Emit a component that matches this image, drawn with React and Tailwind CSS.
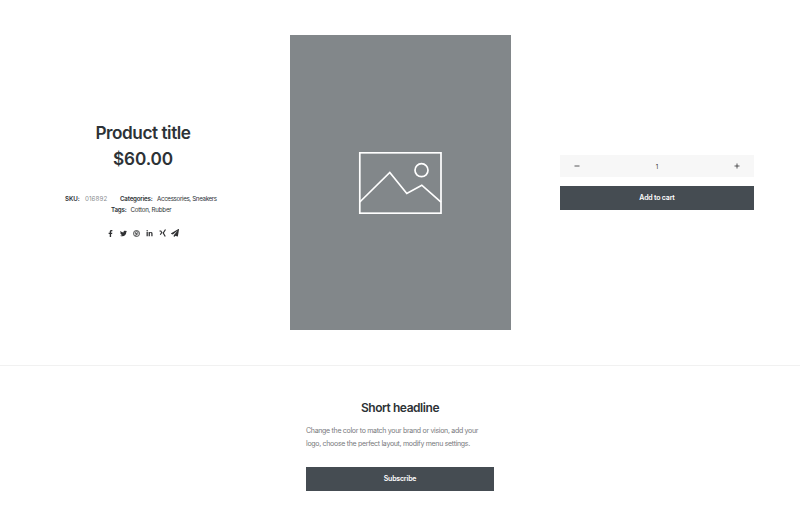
import { FaFacebookF, FaTwitter, FaLinkedinIn, FaPaperPlane } from "react-icons/fa";

function SocialLinks() {
  return (
    <div className="mt-[14px] flex h-2 items-center justify-center pr-[2px] text-[#303133]">
      <span className="flex w-[13px] justify-center"><FaFacebookF size={7} /></span>
      <span className="flex w-[13px] justify-center"><FaTwitter size={7} /></span>
      <span className="flex w-[13px] justify-center">
        <svg width="7" height="7" viewBox="0 0 14 14" fill="none" stroke="currentColor" strokeWidth="1.7">
          <circle cx="7" cy="7" r="6" />
          <path d="M5.500 12 7 6M4.800 8C3.200 5 5 3.400 7.200 3.400c2.400 0 3.400 2 2.500 4-.8 2-2.800 1.800-3.200.8" />
        </svg>
      </span>
      <span className="flex w-[13px] justify-center"><FaLinkedinIn size={7} /></span>
      <span className="flex w-[13px] justify-center">
        <svg width="7" height="8" viewBox="0 0 14 16" fill="none" stroke="currentColor" strokeWidth="2.400">
          <path d="M1 4h2.500l2 3-3 4.500M13 1 8.500 8l4 7" />
        </svg>
      </span>
      <span className="flex w-[11px] justify-center"><FaPaperPlane size={8} /></span>
    </div>
  );
}

function ProductInfo() {
  return (
    <div className="w-[194px] pt-[120px] text-center text-[#2d3236]">
      <h1 className="text-[17.200px] leading-[26px] font-semibold tracking-[-0.45px]">Product title</h1>
      <p className="text-[17.200px] leading-[26px] font-semibold tracking-[-0.1px]">$60.00</p>
      <div className="mt-[21px] flex h-[11px] items-center pl-[19px] text-left text-[6.200px] leading-[11px] whitespace-nowrap">
        <b className="w-5 font-semibold tracking-[-0.1px]">SKU:</b>
        <span className="w-[35px] tracking-[0.1px] text-[#8a8d90]">016892</span>
        <b className="w-[37px] font-semibold tracking-[-0.2px]">Categories:</b>
        <span className="tracking-[-0.33px]">Accessories, Sneakers</span>
      </div>
      <div className="flex h-[11px] items-center pl-[65px] text-left text-[6.200px] leading-[11px] whitespace-nowrap">
        <b className="w-[19.500px] font-semibold tracking-[-0.2px]">Tags:</b>
        <span className="tracking-[-0.23px]">Cotton, Rubber</span>
      </div>
      <SocialLinks />
    </div>
  );
}

function ProductImage() {
  return (
    <div className="mt-[35px] flex h-[295px] w-[221px] items-center justify-center bg-[#82878a] pt-px">
      <svg className="h-[62px] w-[84px]" viewBox="0 0 84 62" fill="none" stroke="#fff" strokeWidth="1.700">
        <rect x="1.800" y="0.800" width="81.200" height="60.400" />
        <path d="m1.800 50 30-29.500 17 21 15-8.300 19.200 17" />
        <circle cx="63.500" cy="18.200" r="6.500" />
      </svg>
    </div>
  );
}

function PurchaseForm() {
  return (
    <div className="w-[194px] pt-[155px] text-[#303133]">
      <div className="flex h-[22px] items-center justify-between bg-[#f7f7f7] px-[14px]">
        <svg className="size-[6px]" viewBox="0 0 6 6" stroke="currentColor" strokeWidth="0.800"><path d="M.5 3h5" /></svg>
        <span className="pt-px text-[6px] leading-[8px]">1</span>
        <svg className="size-[6px]" viewBox="0 0 6 6" stroke="currentColor" strokeWidth="0.800"><path d="M.5 3h5M3 .5v5" /></svg>
      </div>
      <button className="mt-[9px] block h-6 w-full bg-[#454c52] text-[7px] font-semibold tracking-[-0.2px] text-white">Add to cart</button>
    </div>
  );
}

export default function App() {
  return (
    <main className="h-[526px] w-[800px] overflow-hidden bg-white font-['Inter','Liberation_Sans',sans-serif]">
      <section className="flex h-[366px] justify-between border-b border-[#f1f1f1] px-[46px]">
        <ProductInfo />
        <ProductImage />
        <PurchaseForm />
      </section>
      <section className="mx-auto w-[188px] pt-[34px]">
        <h2 className="text-center text-[12px] leading-4 font-semibold tracking-[-0.45px] text-[#2d3236]">Short headline</h2>
        <p className="mt-2 text-[7px] leading-[13px] tracking-[-0.3px] whitespace-nowrap text-[#77797c]">
          Change the color to match your brand or vision, add your<br />
          logo, choose the perfect layout, modify menu settings.
        </p>
        <button className="mt-[17px] block h-6 w-full bg-[#454c52] text-[7px] font-semibold tracking-[-0.2px] text-white">Subscribe</button>
      </section>
    </main>
  );
}
